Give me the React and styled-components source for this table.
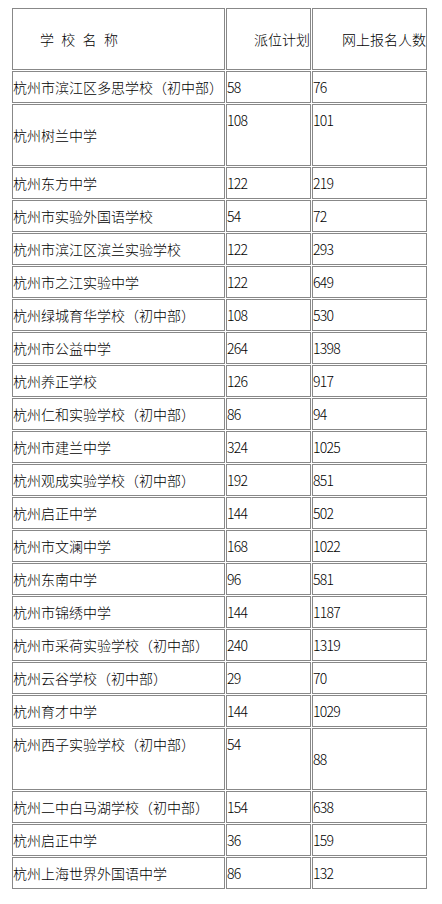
import React from 'react';
import styled, { createGlobalStyle } from 'styled-components';

const GlobalStyle = createGlobalStyle`
  html, body {
    margin: 0;
    padding: 0;
    background: #fff;
  }
  body {
    font-family: "Noto Sans CJK SC", "Liberation Sans", sans-serif;
    color: #000;
  }
`;

// 表格数据：学校名称、派位计划、网上报名人数
const schools = [
  { name: '杭州市滨江区多思学校（初中部）', plan: '58', signup: '76' },
  { name: '杭州树兰中学', plan: '108', signup: '101', tall: true, nameAlign: 'middle', planAlign: 'top', signupAlign: 'top' },
  { name: '杭州东方中学', plan: '122', signup: '219' },
  { name: '杭州市实验外国语学校', plan: '54', signup: '72' },
  { name: '杭州市滨江区滨兰实验学校', plan: '122', signup: '293' },
  { name: '杭州市之江实验中学', plan: '122', signup: '649' },
  { name: '杭州绿城育华学校（初中部）', plan: '108', signup: '530' },
  { name: '杭州市公益中学', plan: '264', signup: '1398' },
  { name: '杭州养正学校', plan: '126', signup: '917' },
  { name: '杭州仁和实验学校（初中部）', plan: '86', signup: '94' },
  { name: '杭州市建兰中学', plan: '324', signup: '1025' },
  { name: '杭州观成实验学校（初中部）', plan: '192', signup: '851' },
  { name: '杭州启正中学', plan: '144', signup: '502' },
  { name: '杭州市文澜中学', plan: '168', signup: '1022' },
  { name: '杭州东南中学', plan: '96', signup: '581' },
  { name: '杭州市锦绣中学', plan: '144', signup: '1187' },
  { name: '杭州市采荷实验学校（初中部）', plan: '240', signup: '1319' },
  { name: '杭州云谷学校（初中部）', plan: '29', signup: '70' },
  { name: '杭州育才中学', plan: '144', signup: '1029' },
  { name: '杭州西子实验学校（初中部）', plan: '54', signup: '88', tall: true, nameAlign: 'top', planAlign: 'top', signupAlign: 'middle' },
  { name: '杭州二中白马湖学校（初中部）', plan: '154', signup: '638' },
  { name: '杭州启正中学', plan: '36', signup: '159' },
  { name: '杭州上海世界外国语中学', plan: '86', signup: '132' },
];

const App = () => (
  <>
    <GlobalStyle />
    <Table lang="zh-CN">
      <tbody>
        <Row $tall>
          <HeadCell $width={213} $indent={27} $spacing={7.3}>学校名称</HeadCell>
          <HeadCell $width={85} $align="right">派位计划</HeadCell>
          <HeadCell $width={115} $align="right">网上报名人数</HeadCell>
        </Row>
        {schools.map((s, i) => (
          <Row key={i} $tall={s.tall}>
            <Cell $valign={s.nameAlign}>{s.name}</Cell>
            <NumCell $valign={s.planAlign}>{s.plan}</NumCell>
            <NumCell $valign={s.signupAlign}>{s.signup}</NumCell>
          </Row>
        ))}
      </tbody>
    </Table>
  </>
);

const Table = styled.table`
  margin: 7px 0 0 11px;
  width: 417px;
  table-layout: fixed;
  border-collapse: separate;
  border-spacing: 1px;
  font-size: 14px;
  font-weight: 300;
  line-height: 30px;
  color: #000;
`;

const Row = styled.tr`
  height: ${p => (p.$tall ? '62px' : '32px')};
`;

const Cell = styled.td`
  box-sizing: border-box;
  border: 1px solid #888;
  padding: 0;
  white-space: nowrap;
  overflow: hidden;
  vertical-align: ${p => p.$valign || 'middle'};
`;

const HeadCell = styled(Cell)`
  width: ${p => p.$width}px;
  text-align: ${p => p.$align || 'left'};
  padding-left: ${p => p.$indent || 0}px;
  letter-spacing: ${p => p.$spacing || 0}px;
`;

const NumCell = styled(Cell)`
  letter-spacing: -0.7px;
`;

export default App;
